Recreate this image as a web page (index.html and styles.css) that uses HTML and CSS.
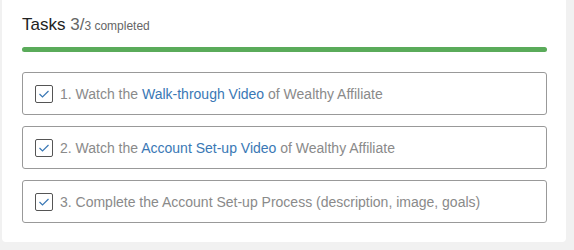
FILE: index.html
```html
<!DOCTYPE html>
<html lang="en">
<head>
    <meta charset="UTF-8">
    <title>Tasks</title>
    <link rel="stylesheet" href="styles.css">
</head>
<body>

<div class="card">
    <h2 class="title">Tasks <span class="count">3/</span><small>3 completed</small></h2>
    <div class="progress"><div class="bar"></div></div>

    <ul class="tasks">
        <li>
            <span class="check"><svg width="12" height="10" viewBox="0 0 12 10"><path d="M1.5 5 L4.5 8 L10.5 2" fill="none" stroke="#3a78b5" stroke-width="1.2"/></svg></span>
            <span class="text">1. Watch the <a href="#">Walk-through Video</a> of Wealthy Affiliate</span>
        </li>
        <li>
            <span class="check"><svg width="12" height="10" viewBox="0 0 12 10"><path d="M1.5 5 L4.5 8 L10.5 2" fill="none" stroke="#3a78b5" stroke-width="1.2"/></svg></span>
            <span class="text">2. Watch the <a href="#">Account Set-up Video</a> of Wealthy Affiliate</span>
        </li>
        <li>
            <span class="check"><svg width="12" height="10" viewBox="0 0 12 10"><path d="M1.5 5 L4.5 8 L10.5 2" fill="none" stroke="#3a78b5" stroke-width="1.2"/></svg></span>
            <span class="text">3. Complete the Account Set-up Process (description, image, goals)</span>
        </li>
    </ul>
</div>

</body>
</html>
```

FILE: styles.css
```css
* {
    margin: 0;
    padding: 0;
}

ul, li {
    list-style: none;
}

a {
    text-decoration: none;
}

body {
    background: #f1f1f1;
    font-family: "Liberation Sans", Arial, sans-serif;
}

.card {
    width: 525px;
    margin-left: 2px;
    padding: 15px 19px 19px 20px;
    background: #fff;
    border-radius: 0 0 4px 4px;
}

.title {
    font-size: 17px;
    font-weight: normal;
    color: #222;
    line-height: 20px;
}
.title .count {
    color: #666;
}
.title small {
    font-size: 12px;
    color: #666;
}

.progress {
    margin-top: 11px;
    height: 5px;
    border-radius: 3px;
    background: #eee;
}
.progress .bar {
    width: 100%;
    height: 5px;
    border-radius: 3px;
    background: #5aab5a;
}

.tasks {
    margin-top: 20px;
    display: flex;
    flex-direction: column;
    gap: 11px;
}
.tasks li {
    display: flex;
    align-items: center;
    gap: 7px;
    height: 41px;
    padding-left: 12px;
    border: 1px solid #999;
    border-radius: 3px;
    font-size: 14px;
    color: #8a8a8a;
}
.tasks li a {
    color: #3a78b5;
}
.tasks .check {
    display: flex;
    align-items: center;
    justify-content: center;
    width: 16px;
    height: 16px;
    border: 1px solid #555;
    border-radius: 2px;
}
```
